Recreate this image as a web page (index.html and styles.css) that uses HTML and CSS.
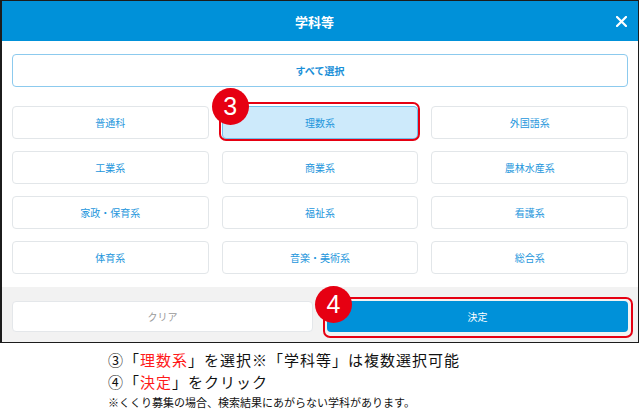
FILE: index.html
```html
<!DOCTYPE html>
<html lang="ja">
<head>
<meta charset="utf-8">
<title>学科等</title>
<link rel="stylesheet" href="styles.css">
</head>
<body>
<div class="shot">
  <header class="head">
    <span></span>
    <h1 class="title">学科等</h1>
    <span class="close" aria-label="閉じる">
      <svg width="11" height="11" viewBox="0 0 11 11"><path d="M1 1L10 10M10 1L1 10" stroke="#fff" stroke-width="2.2" stroke-linecap="square" fill="none"/></svg>
    </span>
  </header>
  <div class="body">
    <div class="btn all">すべて選択</div>
    <div class="grid">
      <div class="btn item">普通科</div>
      <div class="btn item selected">理数系<span class="badge b3">3</span></div>
      <div class="btn item">外国語系</div>
      <div class="btn item">工業系</div>
      <div class="btn item">商業系</div>
      <div class="btn item">農林水産系</div>
      <div class="btn item">家政・保育系</div>
      <div class="btn item">福祉系</div>
      <div class="btn item">看護系</div>
      <div class="btn item">体育系</div>
      <div class="btn item">音楽・美術系</div>
      <div class="btn item">総合系</div>
    </div>
  </div>
  <div class="foot">
    <div class="btn clear">クリア</div>
    <div class="btn decide">決定<span class="badge b4">4</span></div>
  </div>
</div>
<div class="caption">
  <p class="line">③「<span class="red">理数系</span>」を選択※「学科等」は複数選択可能</p>
  <p class="line">④「<span class="red">決定</span>」をクリック</p>
  <p class="note">※くくり募集の場合、検索結果にあがらない学科があります。</p>
</div>
</body>
</html>
```
FILE: styles.css
```css
* { box-sizing: border-box; }
html, body { margin: 0; padding: 0; background: #fff; }
body { font-family: "Noto Sans CJK JP", "Noto Sans", sans-serif; }

.shot {
  width: 639px;
  height: 343px;
  border-style: solid;
  border-color: #1c1c1c;
  border-width: 1px 1px 1px 2px;
  display: flex;
  flex-direction: column;
  background: #fff;
}

.head {
  height: 40px;
  background: #0091d9;
  display: grid;
  grid-template-columns: 1fr auto 1fr;
  align-items: center;
  padding-right: 11px;
}
.title {
  margin: 0;
  color: #fff;
  font-size: 13px;
  font-weight: bold;
  line-height: 1;
}
.close {
  justify-self: end;
  display: flex;
  width: 11px;
  height: 11px;
}

.body {
  padding: 13px 10px 13px;
}

.btn {
  display: flex;
  align-items: center;
  justify-content: center;
  border-radius: 4px;
  font-size: 10px;
  line-height: 1;
  position: relative;
}

.all {
  height: 33px;
  border: 1px solid #8ccaee;
  color: #1a8fd8;
  font-weight: bold;
  margin-bottom: 19px;
}

.grid {
  display: grid;
  grid-template-columns: repeat(3, 1fr);
  grid-auto-rows: 33px;
  column-gap: 13px;
  row-gap: 12px;
}
.item {
  border: 1px solid #e2e6e9;
  color: #2496dc;
}
.item.selected {
  background: #cdeafb;
  border-color: #6ebfec;
}
.item.selected::before {
  content: "";
  position: absolute;
  top: -5px; left: -4px; right: -3px; bottom: -3px;
  border: 2.5px solid #e60012;
  border-radius: 7px;
}

.foot {
  flex: 1;
  background: #f2f2f2;
  display: grid;
  grid-template-columns: 1fr 1fr;
  column-gap: 14px;
  padding: 14px 10px 10px;
  align-items: start;
}
.clear {
  height: 31px;
  background: #fff;
  border: 1px solid #e4e7ea;
  color: #9a9a9a;
}
.decide {
  height: 31px;
  background: #0091d9;
  color: #fff;
}
.decide::before {
  content: "";
  position: absolute;
  top: -4px; left: -4px; right: -5px; bottom: -6px;
  border: 2.5px solid #e60012;
  border-radius: 7px;
}

.badge {
  position: absolute;
  width: 37px;
  height: 37px;
  border-radius: 50%;
  background: #e60012;
  color: #fff;
  font-family: "Liberation Sans", Arial, sans-serif;
  font-size: 25px;
  line-height: 37px;
  text-align: center;
  z-index: 2;
}
.b3 { left: -11px; top: -19px; }
.b4 { left: -12px; top: -15px; }

.caption {
  padding: 6px 0 0 108px;
  color: #111;
}
.caption p { margin: 0; }
.line {
  font-size: 15px;
  letter-spacing: 1px;
  line-height: 22px;
}
.red { color: #ff1a1a; }
.note {
  font-size: 11px;
  line-height: 16px;
  margin-top: 1px !important;
}
```
